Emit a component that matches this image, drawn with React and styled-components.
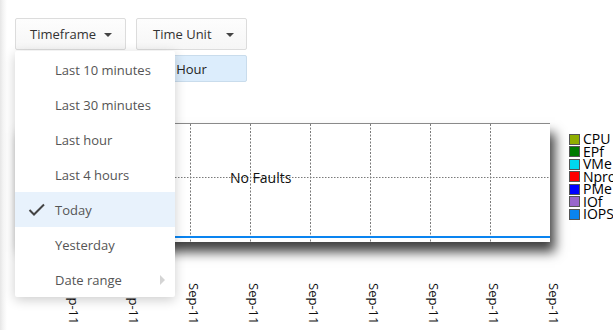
import React from "react";
import styled, { createGlobalStyle } from "styled-components";

const Global = createGlobalStyle`
  html, body { margin: 0; padding: 0; }
  body {
    width: 613px; height: 330px; overflow: hidden;
    font-family: "Open Sans", "Liberation Sans", sans-serif;
    background: linear-gradient(to right, #e6e6e6 0px, #f3f3f3 3px, #ffffff 7px);
  }
`;

const Page = styled.div`
  padding-top: 18px;
  display: flex;
  flex-direction: column;
`;

const Toolbar = styled.div`
  display: flex;
  gap: 10px;
  margin-left: 15px;
`;

const Dropdown = styled.div`
  position: relative;
`;

const Button = styled.div`
  box-sizing: border-box;
  width: 111px;
  height: 32px;
  display: flex;
  align-items: center;
  padding-left: ${p => p.$pl}px;
  background: linear-gradient(#fdfdfd, #f6f6f6);
  border: 1px solid #dcdcdc;
  border-radius: 2px;
  font-size: 13px;
  color: #333;
`;

const Caret = styled.span`
  margin-left: ${p => p.$gap}px;
  width: 0; height: 0;
  border-left: 4px solid transparent;
  border-right: 4px solid transparent;
  border-top: 4px solid #444;
  margin-top: 1px;
`;

const Menu = styled.div`
  position: absolute;
  top: calc(100% + 1px);
  left: 0;
  z-index: 10;
  width: 160px;
  padding-top: 1px;
  background: #fff;
  box-shadow: 0 3px 12px rgba(0,0,0,0.2);
  border-radius: 2px;
`;

const Item = styled.div`
  position: relative;
  height: 35px;
  display: flex;
  align-items: center;
  padding-left: 40px;
  font-size: 13px;
  color: #555;
  background: ${p => (p.$active ? "#e8f2fc" : "transparent")};
`;

const Check = styled.svg`
  position: absolute;
  left: 13px;
  top: 11px;
`;

const SubArrow = styled.span`
  position: absolute;
  right: 10px;
  top: 13px;
  width: 0; height: 0;
  border-top: 5px solid transparent;
  border-bottom: 5px solid transparent;
  border-left: 5px solid #d4d4d4;
`;

const UnitRow = styled.div`
  display: flex;
  margin: 5px 0 0 136px;
`;

const UnitChip = styled.div`
  box-sizing: border-box;
  width: 111px;
  height: 27px;
  display: flex;
  align-items: center;
  justify-content: center;
  background: #dcedfc;
  border: 1px solid #c9dcec;
  border-radius: 2px;
  font-size: 13px;
  color: #222;
`;

const ChartRow = styled.div`
  display: flex;
  margin: 41px 0 0 16px;
  align-items: flex-start;
  height: 119px;
`;

const Plot = styled.div`
  position: relative;
  width: 534px;
  height: 119px;
  background: #fff;
  border-top: 1px solid #8a8a8a;
  box-sizing: border-box;
  box-shadow: 5px 10px 11px rgba(0,0,0,0.75);
`;

const NoData = styled.div`
  position: absolute;
  left: 214px;
  top: 44px;
  font-size: 14px;
  color: #111;
`;

const Legend = styled.div`
  display: flex;
  flex-direction: column;
  margin: 10px 0 0 19px;
`;

const LegendRow = styled.div`
  display: flex;
  align-items: center;
  height: 12.5px;
  line-height: 12.5px;
  font-size: 14px;
  color: #000;
  white-space: nowrap;
`;

const Swatch = styled.span`
  box-sizing: border-box;
  width: 11px;
  height: 11px;
  margin-right: 3px;
  flex: none;
  background: ${p => p.$c};
  border: 1.5px solid #555;
`;

const Axis = styled.div`
  display: flex;
  gap: 47px;
  margin: 41px 0 0 67px;
`;

const Tick = styled.div`
  width: 13px;
  flex: none;
  writing-mode: vertical-rl;
  font-size: 13px;
  line-height: 13px;
  color: #111;
`;

const items = [
  "Last 10 minutes",
  "Last 30 minutes",
  "Last hour",
  "Last 4 hours",
  "Today",
  "Yesterday",
  "Date range",
];

const legend = [
  ["CPU", "#8fae00"],
  ["EPf", "#007a00"],
  ["VMe", "#00d8f0"],
  ["Npro", "#ff0000"],
  ["PMe", "#0000ff"],
  ["IOf", "#9966cc"],
  ["IOPS", "#0a84f0"],
];

function Grid() {
  const xs = [54, 114, 174, 234, 294, 354, 414, 474];
  return (
    <svg width="534" height="118" style={{ display: "block" }}>
      {xs.map(x => (
        <line key={x} x1={x + 0.5} y1="0" x2={x + 0.5} y2="118" stroke="#7a7a7a" strokeDasharray="2 1.5" />
      ))}
      <line x1="0" y1="53.5" x2="534" y2="53.5" stroke="#7a7a7a" strokeDasharray="1.5 1.5" />
      <line x1="0" y1="113" x2="534" y2="113" stroke="#0a84f0" strokeWidth="2" />
    </svg>
  );
}

export default function App() {
  return (
    <>
      <Global />
      <Page>
        <Toolbar>
          <Dropdown>
            <Button $pl={14}>
              Timeframe<Caret $gap={8} />
            </Button>
            <Menu>
              {items.map(t => (
                <Item key={t} $active={t === "Today"}>
                  {t === "Today" && (
                    <Check width="18" height="14" viewBox="0 0 18 14">
                      <polyline points="1.5,7 6,11.5 16,1.5" fill="none" stroke="#444" strokeWidth="2" />
                    </Check>
                  )}
                  {t}
                  {t === "Date range" && <SubArrow />}
                </Item>
              ))}
            </Menu>
          </Dropdown>
          <Button $pl={16}>
            Time Unit<Caret $gap={14} />
          </Button>
        </Toolbar>
        <UnitRow>
          <UnitChip>Hour</UnitChip>
        </UnitRow>
        <ChartRow>
          <Plot>
            <Grid />
            <NoData>No Faults</NoData>
          </Plot>
          <Legend>
            {legend.map(([n, c]) => (
              <LegendRow key={n}>
                <Swatch $c={c} />
                {n}
              </LegendRow>
            ))}
          </Legend>
        </ChartRow>
        <Axis>
          {Array.from({ length: 9 }).map((_, i) => (
            <Tick key={i}>Sep-11</Tick>
          ))}
        </Axis>
      </Page>
    </>
  );
}
